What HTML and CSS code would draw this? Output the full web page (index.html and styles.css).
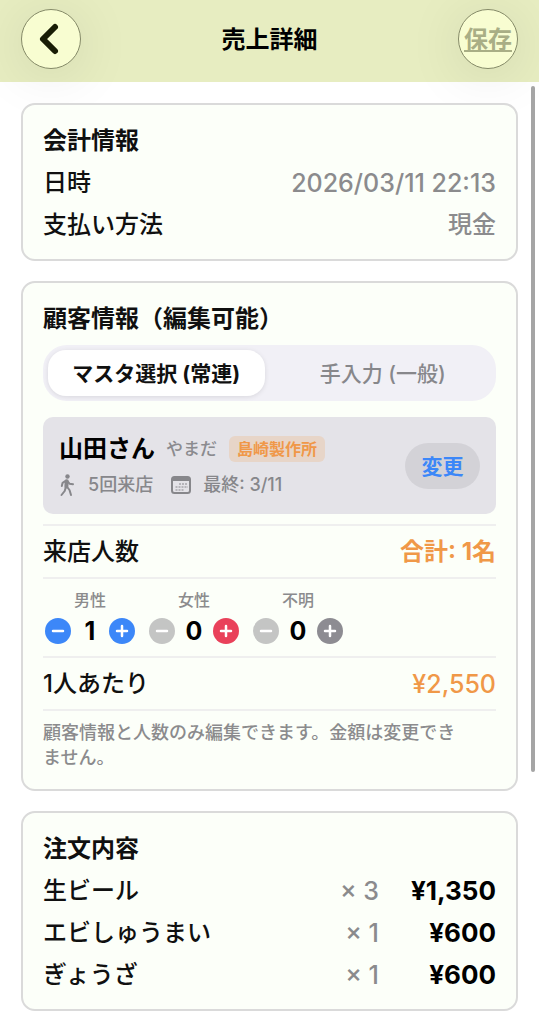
FILE: index.html
```html
<!DOCTYPE html>
<html lang="ja">
<head>
<meta charset="utf-8">
<meta name="viewport" content="width=device-width, initial-scale=1">
<title>売上詳細</title>
<link rel="stylesheet" href="styles.css">
</head>
<body>
<header class="topbar">
  <button class="round" type="button" aria-label="戻る">
    <svg class="chevron" viewBox="0 0 22 34" aria-hidden="true"><path d="M17 5 L5 17 L17 29"/></svg>
  </button>
  <h1 class="title">売上詳細</h1>
  <button class="round save" type="button">保存</button>
</header>

<main class="content">
  <section class="card">
    <h2 class="heading">会計情報</h2>
    <div class="row"><span>日時</span><span class="value number">2026/03/11 22:13</span></div>
    <div class="row"><span>支払い方法</span><span class="value">現金</span></div>
  </section>

  <section class="card">
    <h2 class="heading">顧客情報（編集可能）</h2>
    <div class="segments" role="tablist">
      <button class="segment selected" type="button" role="tab" aria-selected="true">マスタ選択 (常連)</button>
      <button class="segment" type="button" role="tab" aria-selected="false">手入力 (一般)</button>
    </div>

    <div class="customer">
      <div class="customer-info">
        <div class="customer-name">
          <strong class="name">山田さん</strong>
          <span class="kana">やまだ</span>
          <span class="badge">島崎製作所</span>
        </div>
        <div class="customer-meta">
          <svg class="walk" viewBox="0 0 16 24" aria-hidden="true">
            <circle cx="8.500" cy="3.500" r="2.200"/>
            <path class="torso" d="M7.700 8.200 L7.400 13.500"/>
            <path d="M7 7.700 L3.600 9.800 L2.800 13 M8.600 8.300 L10.500 10.700 L14 11.200 M7 13.500 L5.700 18 L2.500 22 M7.800 13.500 L10.500 17 L12 22"/>
          </svg>
          <span class="visits">5回来店</span>
          <svg class="calendar" viewBox="0 0 20 18" aria-hidden="true">
            <rect class="frame" x="1" y="1" width="18" height="16" rx="2.500"/>
            <path class="bar" d="M1 3 H19"/>
            <path class="dots" d="M8 8 H17 M4.500 11 H17 M4.500 14 H13"/>
          </svg>
          <span>最終: 3/11</span>
        </div>
      </div>
      <button class="change" type="button">変更</button>
    </div>

    <div class="row ruled first">
      <span>来店人数</span><strong class="total">合計: 1名</strong>
    </div>

    <div class="counters">
      <div class="counter" role="group" aria-labelledby="male">
        <span class="counter-label" id="male">男性</span>
        <button class="step blue" type="button" aria-label="男性を減らす"><svg viewBox="0 0 26 26" aria-hidden="true"><path d="M8 13 H18"/></svg></button>
        <output class="count">1</output>
        <button class="step blue" type="button" aria-label="男性を増やす"><svg viewBox="0 0 26 26" aria-hidden="true"><path d="M8 13 H18 M13 8 V18"/></svg></button>
      </div>
      <div class="counter" role="group" aria-labelledby="female">
        <span class="counter-label" id="female">女性</span>
        <button class="step" type="button" aria-label="女性を減らす"><svg viewBox="0 0 26 26" aria-hidden="true"><path d="M8 13 H18"/></svg></button>
        <output class="count">0</output>
        <button class="step red" type="button" aria-label="女性を増やす"><svg viewBox="0 0 26 26" aria-hidden="true"><path d="M8 13 H18 M13 8 V18"/></svg></button>
      </div>
      <div class="counter" role="group" aria-labelledby="unknown">
        <span class="counter-label" id="unknown">不明</span>
        <button class="step" type="button" aria-label="不明を減らす"><svg viewBox="0 0 26 26" aria-hidden="true"><path d="M8 13 H18"/></svg></button>
        <output class="count">0</output>
        <button class="step gray" type="button" aria-label="不明を増やす"><svg viewBox="0 0 26 26" aria-hidden="true"><path d="M8 13 H18 M13 8 V18"/></svg></button>
      </div>
    </div>

    <div class="row ruled">
      <span>1人あたり</span><span class="average number">¥2,550</span>
    </div>
    <p class="note">顧客情報と人数のみ編集できます。金額は変更でき<br>ません。</p>
  </section>

  <section class="card">
    <h2 class="heading">注文内容</h2>
    <table class="orders">
      <tbody>
        <tr><th scope="row">生ビール</th><td class="qty">× 3</td><td class="price">¥1,350</td></tr>
        <tr><th scope="row">エビしゅうまい</th><td class="qty">× 1</td><td class="price">¥600</td></tr>
        <tr><th scope="row">ぎょうざ</th><td class="qty">× 1</td><td class="price">¥600</td></tr>
      </tbody>
    </table>
  </section>
</main>
<div class="scroll-thumb" aria-hidden="true"></div>
</body>
</html>
```
FILE: styles.css
```css
* {
  box-sizing: border-box;
}

body {
  margin: 0;
  background: #fff;
  color: #101010;
  font-family: Inter, "Noto Sans CJK JP", sans-serif;
  font-size: 24px;
  font-weight: 500;
  line-height: 30px;
}

button {
  border: 0;
  padding: 0;
  font: inherit;
  white-space: nowrap;
}

h1, h2, p {
  margin: 0;
}

.topbar {
  display: flex;
  align-items: center;
  justify-content: space-between;
  padding: 9px 21px 13px;
  background: #e7edc1;
}

.title {
  padding-top: 2px;
  color: #000;
  font-size: 24px;
  font-weight: 700;
}

.round {
  display: flex;
  align-items: center;
  justify-content: center;
  width: 60px;
  height: 60px;
  border: 1px solid #858a68;
  border-radius: 50%;
  background: #f8fdd1;
  box-shadow: 0 6px 56px rgba(0, 0, 0, 0.1);
}

.chevron {
  width: 22px;
  height: 34px;
  margin-right: 4px;
  fill: none;
  stroke: #191d05;
  stroke-width: 6;
  stroke-linecap: round;
  stroke-linejoin: round;
}

.save {
  padding-top: 2px;
  color: #a9ae85;
  font-weight: 700;
  text-decoration: underline;
  text-decoration-thickness: 2px;
  text-underline-offset: 2px;
}

.content {
  display: flex;
  flex-direction: column;
  gap: 20px;
  padding: 21px 21px 12px;
}

.card {
  padding: 21px 20px 19px;
  border: 2px solid #dadada;
  border-radius: 14px;
  background: #fcfff9;
}

.heading {
  font-size: 24px;
  font-weight: 700;
}

.row {
  display: flex;
  justify-content: space-between;
  margin-top: 12px;
}

.value {
  color: #8b8b8d;
}

.number {
  font-size: 25px;
}

.segments {
  display: flex;
  gap: 10px;
  margin-top: 11px;
  padding: 5px;
  border-radius: 24px;
  background: #f1f0f6;
}

.segment {
  flex: 1;
  height: 46px;
  padding-top: 2px;
  border-radius: 18px;
  background: none;
  color: #87878b;
  font-size: 21px;
}

.segment.selected {
  background: #fff;
  color: #101010;
  font-weight: 700;
  box-shadow: 0 1px 5px rgba(0, 0, 0, 0.1);
}

.customer {
  display: flex;
  align-items: center;
  justify-content: space-between;
  margin-top: 16px;
  padding: 17px 16px;
  border-radius: 10px;
  background: #e4e3e8;
}

.customer-name {
  display: flex;
  align-items: center;
}

.name {
  margin-right: 11px;
  color: #000;
  font-weight: 700;
}

.kana {
  margin-right: 12px;
  color: #8b8b8f;
  font-size: 17px;
}

.badge {
  padding: 0 8px;
  border-radius: 6px;
  background: #e7d5c8;
  color: #f09848;
  font-size: 16px;
  font-weight: 700;
  line-height: 26px;
}

.customer-meta {
  display: flex;
  align-items: center;
  margin-top: 9px;
  color: #87878b;
  font-size: 18px;
  line-height: 24px;
}

.walk {
  width: 16px;
  height: 24px;
  margin-right: 13px;
  fill: #87878b;
}

.walk path {
  fill: none;
  stroke: #87878b;
  stroke-width: 2;
  stroke-linecap: round;
  stroke-linejoin: round;
}

.walk .torso {
  stroke-width: 4;
}

.visits {
  margin-right: 18px;
}

.calendar {
  width: 20px;
  height: 18px;
  margin-right: 12px;
  fill: none;
  stroke: #87878b;
}

.calendar .frame {
  stroke-width: 2;
}

.calendar .bar {
  stroke-width: 4;
}

.calendar .dots {
  stroke-width: 2;
  stroke-dasharray: 2 1;
  opacity: 0.5;
}

.change {
  width: 75px;
  height: 46px;
  padding-top: 2px;
  border-radius: 23px;
  background: #d3d2d7;
  color: #3c87f8;
  font-size: 21px;
  font-weight: 700;
}

.ruled {
  align-items: center;
  height: 55px;
  margin-top: 0;
  border-top: 2px solid #efefef;
  border-bottom: 2px solid #efefef;
}

.first {
  margin-top: 10px;
}

.total {
  color: #f09848;
  font-weight: 700;
}

.average {
  color: #f09848;
}

.counters {
  display: flex;
  gap: 14px;
  padding: 11px 2px 12px;
}

.counter {
  display: grid;
  grid-template-columns: 26px 38px 26px;
  row-gap: 8px;
  align-items: center;
}

.counter-label {
  grid-column: 1 / -1;
  color: #8b8b8d;
  font-size: 16px;
  line-height: 20px;
  text-align: center;
}

.step {
  width: 26px;
  height: 26px;
  border-radius: 50%;
  background: #c4c5c4;
}

.step svg {
  display: block;
  fill: none;
  stroke: #fff;
  stroke-width: 2.5;
  stroke-linecap: round;
}

.step.blue {
  background: #3c87f8;
}

.step.red {
  background: #e9415a;
}

.step.gray {
  background: #8d8c92;
}

.count {
  color: #000;
  font-size: 25px;
  font-weight: 700;
  line-height: 26px;
  text-align: center;
}

.note {
  padding-top: 9px;
  color: #8b8b8d;
  font-size: 18px;
  line-height: 25px;
}

.orders {
  width: 100%;
  border-collapse: collapse;
}

.orders th,
.orders td {
  height: 42px;
  padding: 12px 0 0;
  line-height: 30px;
}

.orders th {
  font-weight: 500;
  text-align: left;
}

.orders .qty {
  color: #8b8b8d;
  font-size: 25px;
  text-align: right;
}

.orders .price {
  width: 1px;
  padding-left: 32px;
  color: #000;
  font-size: 26px;
  font-weight: 700;
  text-align: right;
}

.scroll-thumb {
  position: fixed;
  top: 86px;
  right: 4px;
  width: 4px;
  height: 67vh;
  border-radius: 2px;
  background: #a5a5a5;
}
```
